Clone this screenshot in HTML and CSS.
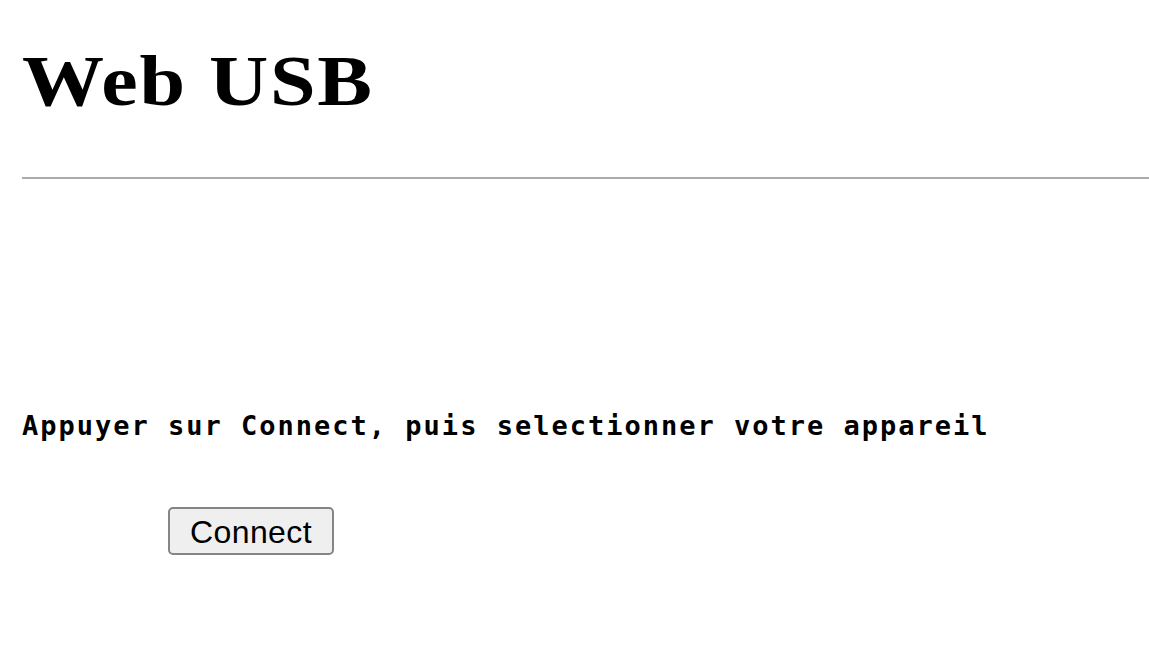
FILE: index.html
```html
<!DOCTYPE html>
<html lang="fr">
<head>
<meta charset="utf-8">
<title>Web USB</title>
<link rel="stylesheet" href="styles.css">
</head>
<body>
<main class="page">
  <h1 class="title"><span class="title-text">Web USB</span></h1>
  <hr class="rule">
  <p class="hint">Appuyer sur Connect, puis selectionner votre appareil</p>
  <div class="actions">
    <button class="connect" type="button">Connect</button>
  </div>
</main>
</body>
</html>
```

FILE: styles.css
```css
html, body {
  margin: 0;
  padding: 0;
  background: #ffffff;
}

.page {
  display: flex;
  flex-direction: column;
  padding-left: 22px;
}

.title {
  margin: 41px 0 0 0;
  font-family: "Liberation Serif", "Times New Roman", serif;
  font-weight: bold;
  font-size: 72px;
  line-height: 80px;
  color: #000;
}

.title-text {
  display: inline-block;
  transform: scaleX(1.14);
  transform-origin: left center;
  letter-spacing: 1.5px;
}

.rule {
  margin: 56px 0 0 0;
  height: 0;
  border: none;
  border-top: 2px solid #acacac;
}

.hint {
  margin: 232px 0 0 0;
  font-family: "DejaVu Sans Mono", monospace;
  font-weight: bold;
  font-size: 27px;
  letter-spacing: 2px;
  line-height: 30px;
  color: #000;
}

.actions {
  display: flex;
  margin-top: 66px;
  padding-left: 146px;
}

.connect {
  width: 166px;
  height: 48px;
  padding: 2px 0 0 0;
  font-family: "Liberation Sans", Arial, sans-serif;
  font-size: 32px;
  letter-spacing: 0.4px;
  color: #000;
  background: #efefef;
  border: 2px solid #858585;
  border-radius: 5px;
}
```
